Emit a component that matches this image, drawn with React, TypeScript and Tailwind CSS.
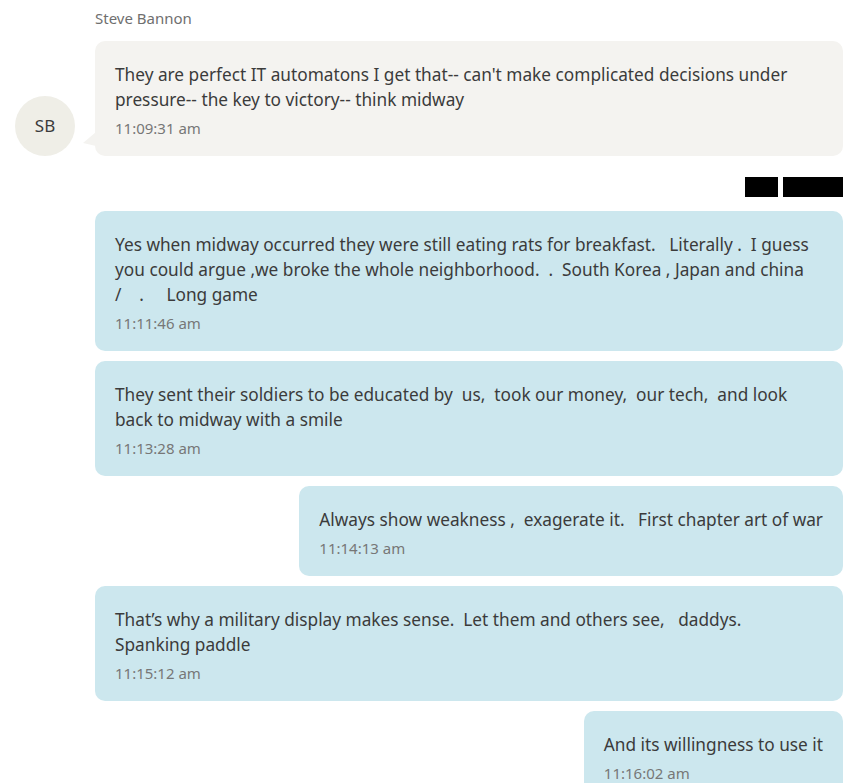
import React from "react";

type Msg = { text: string; time: string; fit?: boolean };

const messages: Msg[] = [
  {
    text: "Yes when midway occurred they were still eating rats for breakfast.   Literally .  I guess you could argue ,we broke the whole neighborhood.  .  South Korea , Japan and china   /    .     Long game",
    time: "11:11:46 am",
  },
  {
    text: "They sent their soldiers to be educated by  us,  took our money,  our tech,  and look back to midway with a smile",
    time: "11:13:28 am",
  },
  {
    text: "Always show weakness ,  exagerate it.   First chapter art of war",
    time: "11:14:13 am",
    fit: true,
  },
  {
    text: "That\u2019s why a military display makes sense.  Let them and others see,   daddys.  Spanking paddle",
    time: "11:15:12 am",
  },
  {
    text: "And its willingness to use it",
    time: "11:16:02 am",
    fit: true,
  },
];

function Bubble({ text, time, fit }: Msg) {
  return (
    <div className={fit ? "flex justify-end" : "flex"}>
      <div
        className={
          "rounded-[10px] bg-[#cce7ee] px-5 pt-[21px] pb-[18px] " + (fit ? "max-w-[748px]" : "w-full")
        }
      >
        <p className="whitespace-pre-wrap text-[17.25px] leading-[25px] text-[#3b3b3b]">{text}</p>
        <p className="mt-[6px] text-[15px] leading-5 text-[#777]">{time}</p>
      </div>
    </div>
  );
}

export default function App() {
  return (
    <div
      className="min-h-screen bg-white pt-2 pr-[13px]"
      style={{ fontFamily: '"Noto Sans", "Open Sans", sans-serif' }}
    >
      <div className="ml-[95px] text-[15px] leading-5 text-[#6f6f6f]">Steve Bannon</div>

      <div className="mt-[13px] flex items-end">
        <div className="ml-[15px] mr-5 flex h-[60px] w-[60px] shrink-0 items-center justify-center rounded-full bg-[#efeee7] text-[17px] text-[#3b3b3b]">
          SB
        </div>
        <div className="relative flex-1 rounded-[10px] bg-[#f4f3f0] px-5 pt-[21px] pb-[18px]">
          <svg
            className="absolute left-[-12px] bottom-[10px]"
            width="13"
            height="14"
            viewBox="0 0 13 14"
          >
            <path d="M13 0 L13 14 L0 11 Z" fill="#f4f3f0" />
          </svg>
          <p className="whitespace-pre-wrap text-[17.25px] leading-[25px] text-[#3b3b3b]">
            They are perfect IT automatons I get that-- can't make complicated decisions under pressure-- the key to victory-- think midway
          </p>
          <p className="mt-[6px] text-[15px] leading-5 text-[#777]">11:09:31 am</p>
        </div>
      </div>

      <div className="mt-[21px] flex justify-end gap-[5px]">
        <div className="h-5 w-[33px] bg-black" />
        <div className="h-5 w-[60px] bg-black" />
      </div>

      <div className="ml-[95px] mt-[14px] flex flex-col gap-[10px]">
        {messages.map((m, i) => (
          <Bubble key={i} {...m} />
        ))}
      </div>
    </div>
  );
}
